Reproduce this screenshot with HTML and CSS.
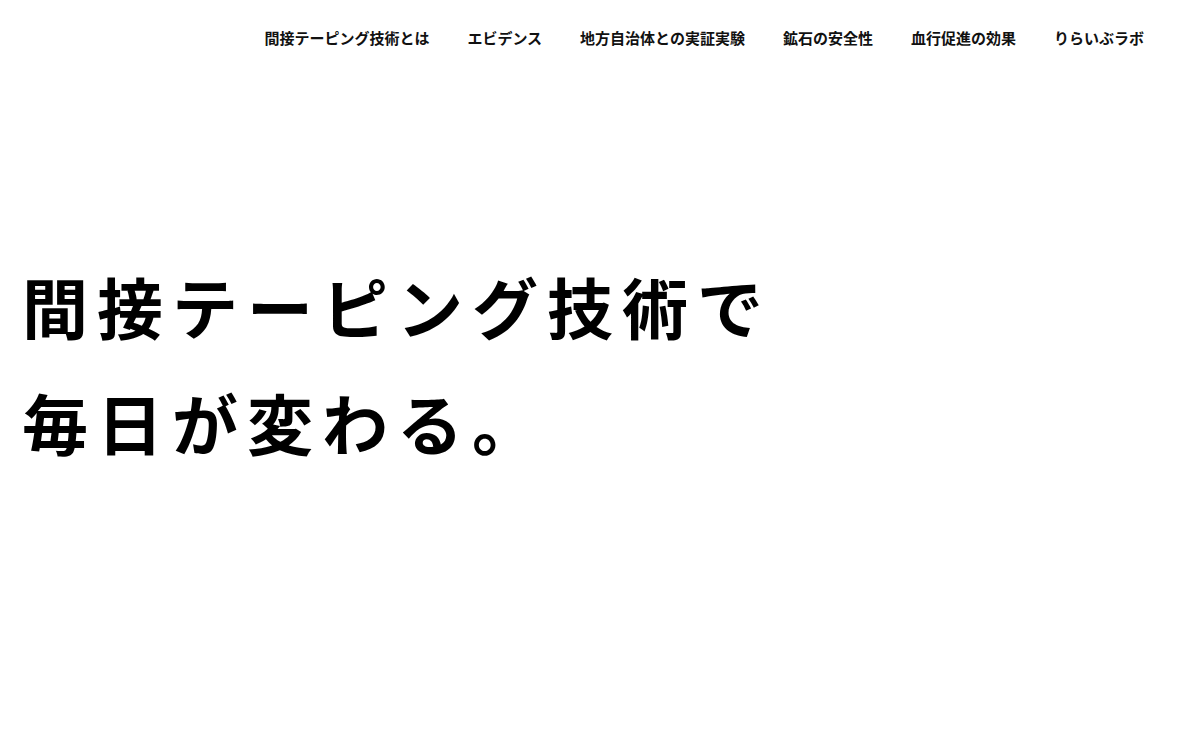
FILE: index.html
```html
<!DOCTYPE html>
<html lang="ja">
<head>
<meta charset="utf-8">
<link rel="stylesheet" href="styles.css">
</head>
<body>
<header class="header">
  <nav class="nav">
    <a class="nav-item">間接テーピング技術とは</a>
    <a class="nav-item">エビデンス</a>
    <a class="nav-item">地方自治体との実証実験</a>
    <a class="nav-item">鉱石の安全性</a>
    <a class="nav-item">血行促進の効果</a>
    <a class="nav-item">りらいぶラボ</a>
  </nav>
</header>
<main class="hero">
  <h1 class="hero-title">間接テーピング技術で<br>毎日が変わる。</h1>
</main>
</body>
</html>
```
FILE: styles.css
```css
html, body {
  margin: 0;
  padding: 0;
  background: #fff;
  color: #000;
  font-family: "Noto Sans CJK JP", "Noto Sans", sans-serif;
}
.header {
  height: 74px;
  display: flex;
  justify-content: flex-end;
  align-items: center;
  padding-right: 56px;
}
.nav {
  display: flex;
  gap: 38px;
}
.nav-item {
  font-size: 15px;
  font-weight: 700;
  color: #111;
  text-decoration: none;
}
.hero {
  padding: 173px 0 0 22px;
}
.hero-title {
  margin: 0;
  font-size: 66px;
  font-weight: 700;
  line-height: 116px;
  letter-spacing: 9px;
}
```
